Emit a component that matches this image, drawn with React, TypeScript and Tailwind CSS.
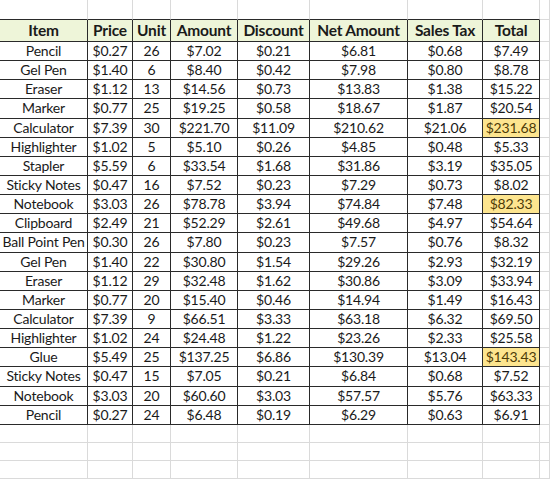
import React from "react";

const cols = ["w-[88px]", "w-[45px]", "w-[38px]", "w-[67px]", "w-[72px]", "w-[98px]", "w-[75px]", "w-[57px]"];
const headers = ["Item", "Price", "Unit", "Amount", "Discount", "Net Amount", "Sales Tax", "Total"];

// last flag = yellow highlight on the total cell
const rows: [string[], boolean][] = [
  [["Pencil", "$0.27", "26", "$7.02", "$0.21", "$6.81", "$0.68", "$7.49"], false],
  [["Gel Pen", "$1.40", "6", "$8.40", "$0.42", "$7.98", "$0.80", "$8.78"], false],
  [["Eraser", "$1.12", "13", "$14.56", "$0.73", "$13.83", "$1.38", "$15.22"], false],
  [["Marker", "$0.77", "25", "$19.25", "$0.58", "$18.67", "$1.87", "$20.54"], false],
  [["Calculator", "$7.39", "30", "$221.70", "$11.09", "$210.62", "$21.06", "$231.68"], true],
  [["Highlighter", "$1.02", "5", "$5.10", "$0.26", "$4.85", "$0.48", "$5.33"], false],
  [["Stapler", "$5.59", "6", "$33.54", "$1.68", "$31.86", "$3.19", "$35.05"], false],
  [["Sticky Notes", "$0.47", "16", "$7.52", "$0.23", "$7.29", "$0.73", "$8.02"], false],
  [["Notebook", "$3.03", "26", "$78.78", "$3.94", "$74.84", "$7.48", "$82.33"], true],
  [["Clipboard", "$2.49", "21", "$52.29", "$2.61", "$49.68", "$4.97", "$54.64"], false],
  [["Ball Point Pen", "$0.30", "26", "$7.80", "$0.23", "$7.57", "$0.76", "$8.32"], false],
  [["Gel Pen", "$1.40", "22", "$30.80", "$1.54", "$29.26", "$2.93", "$32.19"], false],
  [["Eraser", "$1.12", "29", "$32.48", "$1.62", "$30.86", "$3.09", "$33.94"], false],
  [["Marker", "$0.77", "20", "$15.40", "$0.46", "$14.94", "$1.49", "$16.43"], false],
  [["Calculator", "$7.39", "9", "$66.51", "$3.33", "$63.18", "$6.32", "$69.50"], false],
  [["Highlighter", "$1.02", "24", "$24.48", "$1.22", "$23.26", "$2.33", "$25.58"], false],
  [["Glue", "$5.49", "25", "$137.25", "$6.86", "$130.39", "$13.04", "$143.43"], true],
  [["Sticky Notes", "$0.47", "15", "$7.05", "$0.21", "$6.84", "$0.68", "$7.52"], false],
  [["Notebook", "$3.03", "20", "$60.60", "$3.03", "$57.57", "$5.76", "$63.33"], false],
  [["Pencil", "$0.27", "24", "$6.48", "$0.19", "$6.29", "$0.63", "$6.91"], false],
];

function EmptyRow({ h, bottomDark }: { h: string; bottomDark?: boolean }) {
  return (
    <div className={`flex ${h}`}>
      {cols.map((w, i) => (
        <div
          key={i}
          className={`${w} shrink-0 border-r border-b border-r-[#dadada] ${bottomDark ? "border-b-[#2a2a2a]" : "border-b-[#dadada]"}`}
        />
      ))}
      <div className="w-[10px] shrink-0 border-r border-b border-[#dadada]" />
    </div>
  );
}

export default function App() {
  return (
    <div className="w-[553px] h-[480px] overflow-hidden bg-white text-[#1a1a1a]" style={{ fontFamily: "Lato, 'Liberation Sans', sans-serif" }}>
      <EmptyRow h="h-[20px]" bottomDark />

      {/* header */}
      <div className="flex h-[22px]">
        {headers.map((t, i) => (
          <div
            key={t}
            className={`${cols[i]} shrink-0 flex items-center justify-center border-r border-b border-[#2a2a2a] bg-[#eef5d9] text-[15.5px] font-bold tracking-[-0.2px] leading-none whitespace-nowrap`}
          >
            {t}
          </div>
        ))}
        <div className="w-[10px] shrink-0 border-r border-b border-[#dadada]" />
      </div>

      {rows.map(([cells, hi], r) => (
        <div key={r} className="flex h-[19.15px]">
          {cells.map((t, i) => (
            <div
              key={i}
              className={`${cols[i]} shrink-0 flex items-center justify-center border-r border-b border-[#2a2a2a] text-[14px] tracking-[-0.2px] leading-none whitespace-nowrap ${
                hi && i === 7 ? "bg-[#fde58f] text-[#4d3b08]" : ""
              }`}
            >
              {t}
            </div>
          ))}
          <div className="w-[10px] shrink-0 border-r border-b border-[#dadada]" />
        </div>
      ))}

      <EmptyRow h="h-[18px]" />
      <EmptyRow h="h-[18px]" />
      <EmptyRow h="h-[18px]" />
    </div>
  );
}
